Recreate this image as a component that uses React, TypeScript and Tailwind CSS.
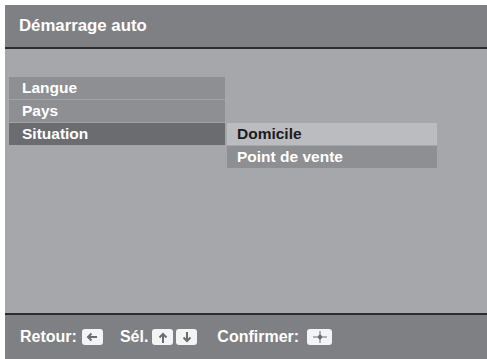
import React from "react";

const font = { fontFamily: '"Liberation Sans", Arial, Helvetica, sans-serif' };

function Key({ children, w = 21 }: { children: React.ReactNode; w?: number }) {
  return (
    <span
      className="inline-flex items-center justify-center bg-[#f4f4f4] rounded-[3px] h-[16px]"
      style={{ width: w }}
    >
      {children}
    </span>
  );
}

export default function App() {
  return (
    <div className="w-[487px] h-[359px] bg-white pt-[5px] pl-[5px]" style={font}>
      <div className="flex flex-col h-[354px] w-[482px] bg-[#a6a7ab]">
        <div className="h-[44px] shrink-0 bg-[#7f8084] border-b-2 border-[#2c2d31] flex items-center pl-[14px]">
          <span className="text-white font-bold text-[16.8px] leading-none">Démarrage auto</span>
        </div>
        <div className="flex-1 pt-[28px] pl-[4px] flex items-start">
          <div className="w-[216px] flex flex-col gap-px bg-[#a2a3a7]">
            <div className="h-[22px] bg-[#8e8f93] flex items-center pl-[13px] text-white font-bold text-[15.5px]">Langue</div>
            <div className="h-[22px] bg-[#8e8f93] flex items-center pl-[13px] text-white font-bold text-[15.5px]">Pays</div>
            <div className="h-[22px] bg-[#6b6c70] flex items-center pl-[13px] text-white font-bold text-[15.5px]">Situation</div>
          </div>
          <div className="ml-[2px] mt-[46px] w-[210px] flex flex-col gap-px">
            <div className="h-[22px] bg-[#bbbcbf] flex items-center pl-[10px] text-[#1b1b1d] font-bold text-[15.5px]">Domicile</div>
            <div className="h-[22px] bg-[#8e8f93] flex items-center pl-[10px] text-white font-bold text-[15.5px]">Point de vente</div>
          </div>
        </div>
        <div className="h-[46px] shrink-0 bg-[#7f8084] border-t-2 border-[#2c2d31] flex items-center pl-[15px] text-white font-bold text-[16px]">
          <span>Retour:</span>
          <span className="ml-[5px] flex">
            <Key>
              <svg width="12" height="10" viewBox="0 0 12 10">
                <path d="M11 5H2M5.5 1.5L2 5l3.5 3.5" stroke="#6b6c70" strokeWidth="2" fill="none" />
              </svg>
            </Key>
          </span>
          <span className="ml-[17px]">Sél.</span>
          <span className="ml-[4px] flex gap-[3px]">
            <Key>
              <svg width="10" height="11" viewBox="0 0 10 11">
                <path d="M5 11V2M1.5 5.5L5 2l3.5 3.5" stroke="#6b6c70" strokeWidth="2" fill="none" />
              </svg>
            </Key>
            <Key>
              <svg width="10" height="11" viewBox="0 0 10 11">
                <path d="M5 0v9M1.5 5.5L5 9l3.5-3.5" stroke="#6b6c70" strokeWidth="2" fill="none" />
              </svg>
            </Key>
          </span>
          <span className="ml-[20px]">Confirmer:</span>
          <span className="ml-[8px] flex">
            <Key w={25}>
              <svg width="14" height="12" viewBox="0 0 14 12">
                <path d="M7 0v3.5M7 8.5V12M0 6h4M10 6h4" stroke="#6b6c70" strokeWidth="1" fill="none" />
                <path d="M7 3L10 6 7 9 4 6Z" fill="#6b6c70" />
              </svg>
            </Key>
          </span>
        </div>
      </div>
    </div>
  );
}
